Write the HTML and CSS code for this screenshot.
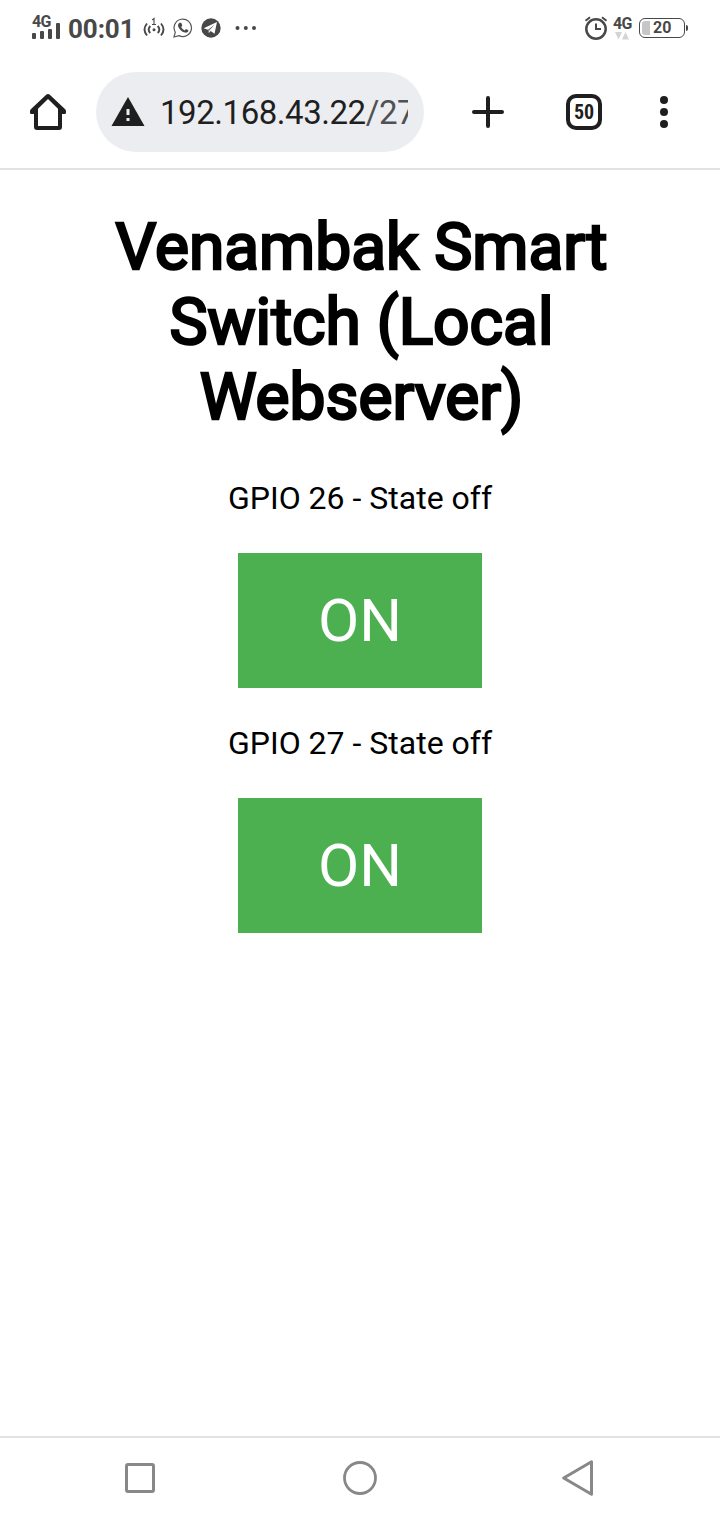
FILE: index.html
```html
<!DOCTYPE html>
<html lang="en">
<head>
<meta charset="utf-8">
<title>Venambak Smart Switch</title>
<link rel="stylesheet" href="styles.css">
</head>
<body>
<header class="status">
  <div class="signal"><span class="net">4G</span>
    <svg width="29" height="17" viewBox="0 0 29 17" fill="#484848"><rect x="0" y="11" width="4" height="6" rx="1"/><rect x="8" y="9" width="4" height="8" rx="1"/><rect x="16" y="7" width="4" height="10" rx="1"/><rect x="24" y="1" width="4" height="16" rx="1"/></svg>
  </div>
  <span class="clock">00:01</span>
  <svg class="hotspot" width="22" height="22" viewBox="0 0 22 22" fill="none" stroke="#484848" stroke-width="1.900"><path d="M4 6.500Q-1 12.500 4 18.500M7.300 9Q4 12.500 7.300 16M18 6.500Q23 12.500 18 18.500M14.700 9Q18 12.500 14.700 16"/><circle cx="11" cy="12.800" r="1.500" fill="#484848" stroke="none"/><path d="M9.200 3L11 1.500V7.500M9 7.500h4" stroke-width="1.100"/></svg>
  <svg class="whatsapp" width="20" height="20" viewBox="0 0 20 20"><path d="M1 19L2.300 14.200A8.700 8.700 0 1 1 6 17.600Z" fill="none" stroke="#555" stroke-width="1.200"/><path d="M6.600 4.800L8.200 4.700 9.300 7.600 8.200 9C9.200 10.900 10.200 11.700 11.700 12.400L13 11.100 15.400 12.300C15.500 14.200 13.800 15 12.200 14.600C8.700 13.800 5.700 10.600 5.100 7.900C4.900 6.700 5.700 5.300 6.600 4.800Z" fill="#484848"/></svg>
  <svg class="telegram" width="20" height="20" viewBox="0 0 20 20"><circle cx="10" cy="10" r="9.700" fill="#484848"/><path d="M2.700 10.300L16 4.100 13.500 15.800 9.700 13.100 7.800 15.100 7 11.800Z" fill="#fff"/><path d="M7 11.800L13.700 6.500 8.300 12.400 7.800 15.100Z" fill="#666"/></svg>
  <svg class="more" width="22" height="6" viewBox="0 0 22 6" fill="#484848"><circle cx="2.500" cy="3" r="2"/><circle cx="10.800" cy="3" r="2"/><circle cx="19" cy="3" r="2"/></svg>
  <svg class="alarm" width="24" height="24" viewBox="0 0 24 24" fill="none" stroke="#484848"><circle cx="12" cy="13" r="9.700" stroke-width="2.500"/><path d="M1.500 4.700L6 1.300M18 1.300L22.500 4.700" stroke-width="2"/><path d="M12 7.500V13H17" stroke-width="2"/></svg>
  <div class="data"><span class="net">4G</span>
    <svg width="15" height="8" viewBox="0 0 15 8" fill="#d4d4d4"><path d="M0 0H7L3.500 7.500ZM7 7.500H14L10.500 0Z"/></svg>
  </div>
  <div class="battery"><span class="level">20</span></div><i class="tip"></i>
</header>
<nav class="toolbar">
  <svg class="home" width="36" height="36" viewBox="0 0 36 36" fill="#1f1f1f"><path fill-rule="evenodd" d="M18 0Q19 0 19.800.8L35.200 15.300Q36 16.200 36 17V18.500Q36 20 34.700 20H32V33Q32 36 29 36H7Q4 36 4 33V20H1.300Q0 20 0 18.500V17Q0 16.200.8 15.300L16.200.8Q17 0 18 0ZM18 5L8 14.700V32H28V14.700Z"/></svg>
  <div class="address">
    <svg class="warn" width="34" height="30" viewBox="0 0 34 30"><path d="M17 0L33.500 29H.5Z" fill="#1f1f1f"/><path d="M15.500 12h3v6h-3zM15.500 21h3v3h-3z" fill="#ecedf1"/></svg>
    <span class="url">192.168.43.22<span class="path">/27</span></span>
  </div>
  <svg class="plus" width="32" height="32" viewBox="0 0 32 32" stroke="#1f1f1f" stroke-width="4" stroke-linecap="round"><path d="M16 2V30M2 16H30"/></svg>
  <div class="tabs">50</div>
  <svg class="menu" width="8" height="32" viewBox="0 0 8 32" fill="#1f1f1f"><circle cx="4" cy="4" r="4"/><circle cx="4" cy="16" r="4"/><circle cx="4" cy="28" r="4"/></svg>
</nav>
<main class="page">
  <h1 class="title">Venambak Smart Switch (Local Webserver)</h1>
  <p class="state">GPIO 26 - State off</p>
  <button class="switch">ON</button>
  <p class="state">GPIO 27 - State off</p>
  <button class="switch">ON</button>
</main>
<footer class="navbar">
  <svg class="recent" width="30" height="30" viewBox="0 0 30 30" fill="none" stroke="#888" stroke-width="3"><rect x="1.500" y="1.500" width="27" height="27" rx="1.500"/></svg>
  <svg class="circle" width="34" height="34" viewBox="0 0 34 34" fill="none" stroke="#888" stroke-width="2.800"><circle cx="17" cy="17" r="15.500"/></svg>
  <svg class="back" width="32" height="36" viewBox="0 0 32 36" fill="none" stroke="#888" stroke-width="3" stroke-linejoin="round"><path d="M29.500 1.700V34.300L1.700 18Z"/></svg>
</footer>
</body>
</html>
```
FILE: styles.css
```css
* { box-sizing: border-box; }
body { margin: 0; width: 720px; height: 1520px; display: flex; flex-direction: column; background: #fff; color: #000; font-family: Roboto, sans-serif; overflow: hidden; }
svg { display: block; flex: none; }
.status { height: 56px; flex: none; display: flex; align-items: center; padding-left: 32px; color: #484848; }
.signal { width: 30px; height: 22px; display: flex; flex-direction: column; justify-content: space-between; }
.net { font-size: 16px; line-height: 14px; height: 5px; font-weight: 700; letter-spacing: -.6px; }
.signal .net { margin-top: -2px; }
.clock { width: 66px; margin-left: 6px; font-size: 26px; line-height: 30px; font-weight: 700; letter-spacing: -.1px; margin-top: 2px; }
.hotspot { margin-left: 9px; }
.whatsapp { margin-left: 8px; }
.telegram { margin-left: 8px; }
.more { margin-left: 14px; }
.alarm { margin-left: 327px; }
.data { width: 20px; height: 23px; margin-left: 5px; display: flex; flex-direction: column; justify-content: space-between; }
.data svg { margin-left: 2px; }
.battery { width: 46px; height: 20px; margin-left: 6px; border: 1.5px solid #484848; border-radius: 6px; padding: 2px; display: flex; align-items: center; }
.battery::before { content: ""; width: 8px; height: 14px; background: #c6c6c6; border-radius: 3px 0 0 3px; }
.level { margin-left: 3px; font-size: 16px; line-height: 16px; font-weight: 700; }
.tip { width: 2px; height: 6px; margin-left: 1px; background: #484848; border-radius: 0 2px 2px 0; }
.toolbar { height: 114px; flex: none; display: flex; align-items: center; padding-left: 30px; border-bottom: 2px solid #e2e2e2; }
.address { width: 328px; height: 80px; margin-left: 30px; padding: 0 15px; border-radius: 40px; background: #ecedf1; display: flex; align-items: center; }
.warn { margin-top: -1px; }
.url { width: 248px; margin-left: 15px; overflow: hidden; white-space: nowrap; font-size: 33px; letter-spacing: -.45px; line-height: 40px; color: #1f1f1f; margin-top: 2px; }
.path { color: #505154; }
.plus { margin-left: 48px; }
.tabs { width: 36px; height: 36px; margin-left: 62px; border: 4px solid #1f1f1f; border-radius: 10px; font: 700 20px/29px "Roboto Condensed", Roboto, sans-serif; font-stretch: condensed; color: #1f1f1f; text-align: center; }
.menu { margin-left: 58px; }
.page { flex: 1; display: flex; flex-direction: column; align-items: center; }
.title { width: 560px; margin: 40px 0 45px; padding-left: 3px; font-size: 64px; line-height: 75px; font-weight: 400; text-align: center; -webkit-text-stroke: 2.6px #000; }
.state { margin: 0; font-size: 32px; line-height: 37px; height: 73px; }
.switch { width: 244px; height: 135px; margin: 0 0 37px; padding: 0; border: 0; background: #4caf50; color: #fff; font: 60px/71px Roboto, sans-serif; }
.navbar { height: 84px; flex: none; display: flex; align-items: center; border-top: 2px solid #e2e2e2; padding: 0 0 2px 125px; }
.circle { margin-left: 188px; }
.back { margin-left: 185px; }
```
